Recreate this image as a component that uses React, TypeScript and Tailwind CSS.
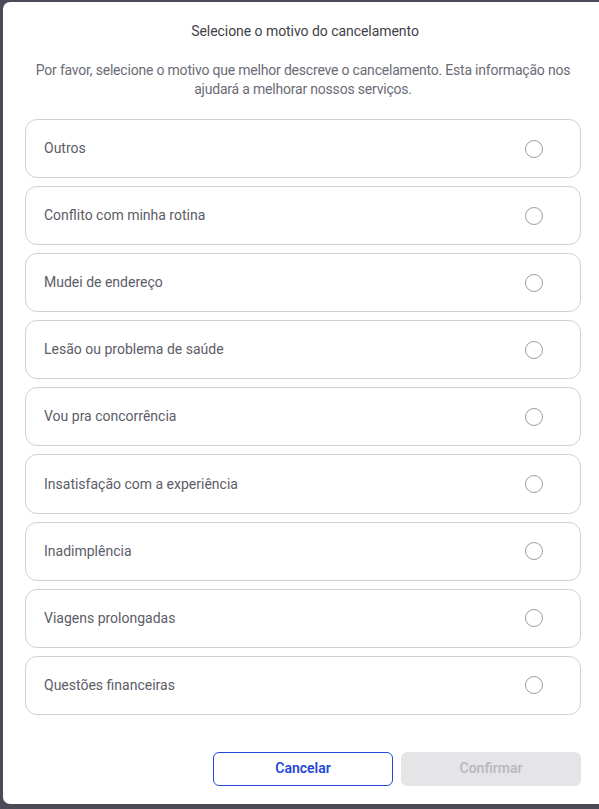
import React from "react";

const reasons = [
  "Outros",
  "Conflito com minha rotina",
  "Mudei de endereço",
  "Lesão ou problema de saúde",
  "Vou pra concorrência",
  "Insatisfação com a experiência",
  "Inadimplência",
  "Viagens prolongadas",
  "Questões financeiras",
];

export default function App() {
  return (
    <div
      className="w-[599px] h-[809px] overflow-hidden bg-[#4b4a57] pt-[2px] pl-[3px]"
      style={{ fontFamily: "Roboto, 'Noto Sans', sans-serif" }}
    >
      <div className="w-[600px] h-[802px] bg-white rounded-l-[7px] flex flex-col px-[22px]">
        <h2 className="text-center text-[14px] text-[#3f3f46] mt-[19px] leading-[20px] tracking-[-0.05px] pl-[4px]">
          Selecione o motivo do cancelamento
        </h2>
        <p className="text-center text-[14px] text-[#6b6b76] leading-[19px] mt-[20px] -mx-[6px] tracking-[-0.2px]">
          Por favor, selecione o motivo que melhor descreve o cancelamento. Esta informação nos ajudará a melhorar nossos serviços.
        </p>
        <div className="flex flex-col gap-[8px] mt-[20px]">
          {reasons.map((r) => (
            <label
              key={r}
              className="h-[59.1px] border border-[#d1d1d6] rounded-[12px] flex items-center justify-between pl-[18px] pr-[37px]"
            >
              <span className="text-[14px] text-[#5c5c68]">{r}</span>
              <span className="w-[18px] h-[18px] rounded-full border border-[#9d9da5]" />
            </label>
          ))}
        </div>
        <div className="flex justify-end gap-[8px] mt-[37px]">
          <button className="w-[180px] h-[34px] rounded-[6px] border border-[#2447d6] text-[#2447d6] text-[14px] font-semibold">
            Cancelar
          </button>
          <button className="w-[180px] h-[34px] rounded-[6px] bg-[#e5e5e8] text-[#b9b9c0] text-[14px] font-semibold">
            Confirmar
          </button>
        </div>
      </div>
    </div>
  );
}
